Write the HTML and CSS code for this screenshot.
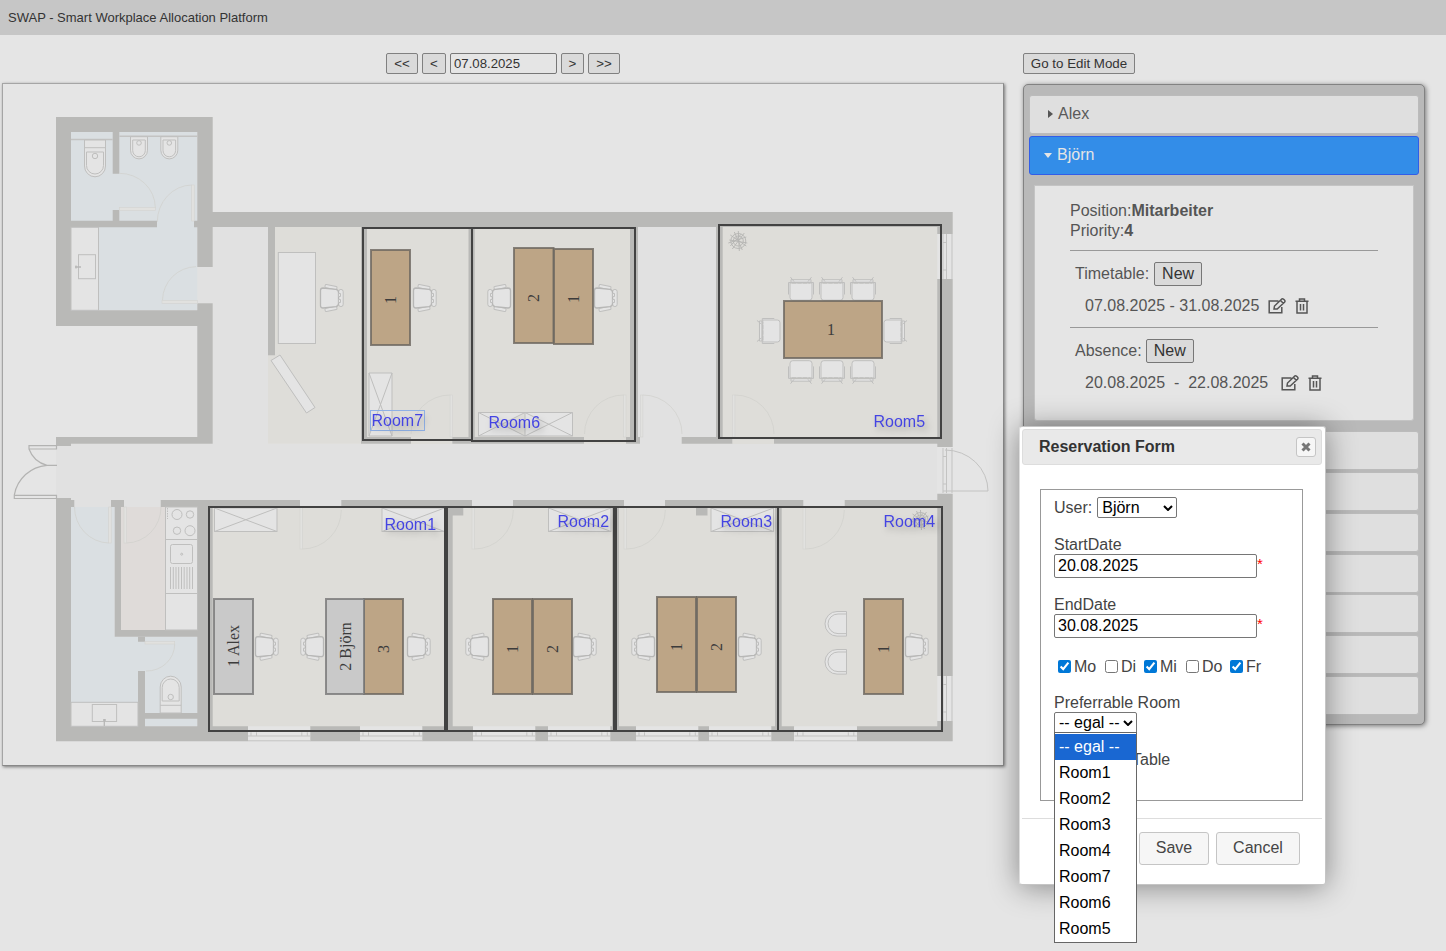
FILE: index.html
```html
<!DOCTYPE html>
<html lang="en">
<head>
<meta charset="utf-8">
<title>SWAP - Smart Workplace Allocation Platform</title>
<link rel="stylesheet" href="styles.css">
</head>
<body>
<header class="topbar">SWAP - Smart Workplace Allocation Platform</header>
<main class="layout">
  <section class="plan-column">
    <div class="date-nav">
      <button class="btn w32">&lt;&lt;</button><button class="btn w24">&lt;</button><input class="date" type="text" value="07.08.2025"><button class="btn w23">&gt;</button><button class="btn w32">&gt;&gt;</button>
    </div>
    <div class="plan">
      <svg class="floor" viewBox="3 84 1000 681" width="1000" height="681">
        <defs>
          <g id="office" class="furn">
            <rect x="-7" y="-12.5" width="12" height="3.2" rx="1" transform="rotate(12 -1 -11)"/>
            <rect x="-7" y="9.3" width="12" height="3.2" rx="1" transform="rotate(-12 -1 11)"/>
            <rect x="6.6" y="-8.6" width="4.6" height="17.2" rx="2.3"/>
            <path d="M-9-10 L4-8.6 Q6.5-8 6.5-5.500 L6.500 5.500 Q6.500 8 4 8.600 L-9 10 Q-11.500 10-11.500 7.500 L-11.500-7.500 Q-11.500-10-9-10Z" class="bold"/>
            <path d="M6.500-4.500h2v3h-2zM6.500 1.500h2v3h-2z"/>
          </g>
          <g id="meeting" class="furn">
            <path d="M-10.500-12.300L-7-8M10.500-12.300L7-8M-12.500 5v-12h25v12M-10-9.800h20v2.500h-20z"/>
            <path d="M-11-6.500h22v14.500q0 2.700-2.700 2.700h-16.600q-2.700 0-2.700-2.700z"/>
            <path d="M-9-6.500h18" stroke-dasharray="4 1.500"/>
          </g>
          <g id="plant" class="leafy">
            <circle r="7.500"/><circle r="5"/>
            <path d="M-10 2L8-4M-8-6L8 5M0-10L1 10M-6 8L6-8M-9-1L9 2M-4-9L4 9M-8 5L3-7"/>
          </g>
          <g id="bidet" class="furn"><path d="M-8.500 0h17v13.500a8.500 8.700 0 0 1-17 0z"/><path d="M-6.300 3.300h12.600v10.500a6.300 6.300 0 0 1-12.600 0z"/><circle cy="6.200" r="2.300"/></g>
          <g id="wc" class="furn"><path d="M-10.500 0h21v26a10.500 10.800 0 0 1-21 0zM-10.500 7.700h21"/><path d="M-8.500 12h17v13.500a8.500 8.500 0 0 1-17 0z"/><circle cy="16" r="2.700"/></g>
          <g id="shelf" class="furn"><rect width="62.500" height="23.500"/><path d="M0 0L62.500 23.500M62.500 0L0 23.500"/></g>
          <g id="win"><rect width="62.300" height="15" class="pale"/><path d="M0 9.700h62.300M0 14.500h62.300M3 6v3.500M8.500 6v3.500M53.800 6v3.500M59.300 6v3.500" class="line"/></g>
          <g id="sidewin"><rect width="15.400" height="45" class="pale"/><path d="M5.700 0v45M9.200 0v45M14.700 0v45M5.700 8.500h3.500M5.700 36h3.500" class="line"/></g>
          <g id="door" class="swing"><rect x="0" y="0" width="2.400" height="42"/><path d="M2.400 42A39 39 0 0 0 41.300 3"/></g>
          <g id="doorup" class="swing"><rect x="0" y="-42" width="2.400" height="42"/><path d="M2.400-42A39 39 0 0 1 41.500-3"/></g>
        </defs>

        <!-- floors -->
        <path class="hall" d="M212.700 227H268V443.700H937.300V500.500H56V443.700H212.700ZM197 267h16v36.300h-16zM638 227h78v217h-78zM74.300 500h36.700v7H74.300zM124 500h36.700v7H124zM300 500h41v7h-41zM472 500h41v7h-41zM624 500h41v7h-41zM803.300 500h41.400v7h-41.400z"/>
        <path class="wet" d="M71 132H197.300V310.300H71ZM71 507H114.700V636.700H197.300V726.300H71Z"/>
        <path class="kitchen" d="M121 507h44.500v123H121z"/>
        <path class="office-floor" d="M268 227H361V443.700H268ZM362 227H638V438H362ZM411 437h41v7h-41zM584 437h42v7h-42zM716 227H938V438H716ZM732 437h42v7h-42zM208 507H938V727H208Z"/>

        <!-- walls -->
        <path class="wall" d="M56 117H212.700V212H952.700V234H937.300V227H212.700V267H197.300V132H71V310.300H197.300V303.300H212.700V443.700H71V446H56V437H197.300V326H56Z"/>
        <path class="wall" d="M112.700 132h6.600v41.700h-6.600zM112.700 210h6.600v11h-6.600zM71 220.700h86v6.600H71zM194 220.700h4v6.600h-4zM268 227h7v128.300h-7zM361 227h6v216.700h-6zM361 437h50v6.700h-50zM468.500 227h6.200v216.700h-6.200zM452.300 437H584v6.700H452.300zM630 227h8v210h2v6.700h-14V437h4zM716 227h6.700v210H716zM681.700 437h50.600v6.700h-50.600zM774 437h163.300V279h15.400v168h-15.400v-3.300H774z"/>
        <path class="wall" d="M56 498H71V500H74.300V507H71V726.300H197.300V636.700H114.700V507H111V500H124V507H121V630H197.300V507H160.700V500H300V507H212.700V726.300H248V741.300H56Z"/>
        <path class="wall" d="M341.300 500H472v7H341.300zM513 500h111v7H513zM665 500h138.300v7H665zM844.700 500h92.600v-6.300h15.400V676h-15.400V507h-92.600zM937.300 720.700h15.400v20.600H857V726.300h80.300zM310 726.300h50v15h-50zM422 726.300h51v15h-51zM535 726.300h13v15h-13zM610 726.300h26v15h-26zM698 726.300h11v15h-11zM771 726.300h23v15h-23z"/>
        <path class="wall" d="M444 507h8.700v220H444zM450 507h13.300v8.500H450zM612 507h7v220h-7zM696 507h11.500v8.500H696zM775 507h6.700v220H775zM138 636.700h7v5h-7zM138 671h7v56h-7zM145 713h53v5.700h-53z"/>

        <!-- windows -->
        <use href="#win" x="248" y="726.300"/><use href="#win" x="360" y="726.300"/><use href="#win" x="473" y="726.300"/><use href="#win" x="548" y="726.300"/><use href="#win" x="636" y="726.300"/><use href="#win" x="709" y="726.300"/><use href="#win" x="794.500" y="726.300"/>
        <use href="#sidewin" x="937.300" y="234"/><use href="#sidewin" x="937.300" y="448"/><use href="#sidewin" x="937.300" y="676"/>

        <!-- doors -->
        <g class="swing">
          <rect x="119.300" y="207.500" width="36" height="3"/><path d="M119.300 173.300A36 34.500 0 0 1 155.300 207.500"/>
          <rect x="191.700" y="185" width="2.500" height="36"/><path d="M157.300 222A35 37 0 0 1 191.700 185"/>
          <rect x="162" y="300.300" width="35.500" height="3"/><path d="M162.500 300A34 34 0 0 1 196 266.700"/>
          <rect x="108.700" y="507" width="2.500" height="36"/><path d="M74.500 507A35 36 0 0 0 108.700 543"/>
          <rect x="124" y="507" width="2.500" height="36"/><path d="M161 507A35 36 0 0 1 126.500 543"/>
          <rect x="145" y="641.500" width="29.700" height="2.500"/><path d="M174.700 644A28 27 0 0 1 146 671"/>
        </g>
        <use href="#door" x="300" y="507"/><use href="#door" x="472" y="507"/><use href="#door" x="624" y="507"/><use href="#door" x="803" y="507"/>
        <use href="#doorup" x="640.500" y="437"/><use href="#doorup" x="732.500" y="437"/>
        <use href="#doorup" transform="translate(452.500 437) scale(-1 1)"/><use href="#doorup" transform="translate(626 437) scale(-1 1)"/>
        <path class="entry" d="M56.500 445.700H29V449H56.500ZM29 449A26 26 0 0 0 47 465.300H57M56.500 495.300H14.300V498.500H56.500ZM14.300 495A36 36 0 0 1 47 465.300"/>
        <path class="line" d="M945 450A43 41 0 0 1 988 491H943"/>

        <!-- sanitary and kitchen -->
        <path class="line" d="M71 139.500h41.700M119.300 136.300h78" stroke-width="1.400"/>
        <use href="#wc" x="95" y="140"/><use href="#bidet" x="139" y="136.700"/><use href="#bidet" x="169.300" y="136.700"/>
        <use href="#wc" transform="translate(170.700 713) scale(1 -1)"/>
        <g class="furn">
          <rect x="71" y="227.300" width="27.500" height="83"/><rect x="78.500" y="254.700" width="17" height="24"/><path d="M75 267h6M76 265.500v3" class="bold"/>
          <rect x="71" y="702.300" width="67" height="24"/><rect x="92.300" y="704.500" width="24.300" height="17"/><path d="M104.300 719v7M103 720h3" class="bold"/>
          <rect x="165.500" y="507" width="32" height="123"/><path d="M165.500 539.500h32M165.500 593.500h32"/>
          <circle cx="177" cy="514.500" r="5"/><circle cx="190" cy="514.500" r="3.700"/><circle cx="177" cy="530.700" r="3.700"/><circle cx="190" cy="530.700" r="5"/><path d="M167.500 508v11" stroke-dasharray="1.500 1"/>
          <rect x="170.500" y="544.500" width="22" height="19" rx="2"/><circle cx="181.700" cy="554.200" r="1"/>
          <path d="M170.500 567v22M173.300 567v22M176 567v22M178.700 567v22M181.500 567v22M184.200 567v22M187 567v22M189.700 567v22M192.500 567v22"/>
          <rect x="278.300" y="252.500" width="37.200" height="91"/><path d="M271 360.500L280 355L315 407.500L306.500 413Z"/>
          <path d="M846.500 611.500H837a12 12.300 0 0 0 0 24.600h9.500zM846.500 614H838a10 9.800 0 0 0 0 19.600h8.500M846.500 649.500H837a12 12.300 0 0 0 0 24.600h9.500zM846.500 652H838a10 9.800 0 0 0 0 19.600h8.500"/>
        </g>

        <!-- shelves and plants -->
        <use href="#shelf" x="214.500" y="508"/><use href="#shelf" x="382" y="508"/><use href="#shelf" x="548.500" y="508"/><use href="#shelf" x="711" y="508"/>
        <g class="furn"><path d="M369 373h23v63h-23zL392 436M392 373L369 436M478.500 412.500h94v23.500h-94zL525 436V412.500L478.500 436M525 412.500L572.500 436M572.500 412.500L525 436"/></g>
        <use href="#plant" x="738.300" y="241"/><use href="#plant" x="920.500" y="520"/>

        <!-- chairs -->
        <use href="#office" x="332" y="298"/><use href="#office" x="425" y="298"/><use href="#office" x="606" y="298"/><use href="#office" transform="translate(499 298) scale(-1 1)"/>
        <use href="#office" x="267" y="646.700"/><use href="#office" transform="translate(312 646.700) scale(-1 1)"/><use href="#office" x="419" y="646.700"/>
        <use href="#office" transform="translate(477 646.700) scale(-1 1)"/><use href="#office" x="585" y="646.700"/>
        <use href="#office" transform="translate(643 646.700) scale(-1 1)"/><use href="#office" x="750" y="646.700"/><use href="#office" x="917" y="646.700"/>
        <use href="#meeting" x="801" y="289.500"/><use href="#meeting" x="832" y="289.500"/><use href="#meeting" x="863" y="289.500"/>
        <use href="#meeting" transform="translate(801 371.400) scale(1 -1)"/><use href="#meeting" transform="translate(832 371.400) scale(1 -1)"/><use href="#meeting" transform="translate(863 371.400) scale(1 -1)"/>
        <use href="#meeting" transform="translate(769.300 331) rotate(-90)"/><use href="#meeting" transform="translate(894.700 331) rotate(90)"/>

        <!-- bookable rooms -->
        <g class="room">
          <rect x="363" y="228" width="109" height="212"/><rect x="472" y="228" width="163" height="213"/><rect x="719" y="225" width="222" height="213"/>
          <rect x="209" y="507" width="236" height="224"/><rect x="447" y="507" width="167" height="224"/><rect x="616" y="507" width="162" height="224"/><rect x="778" y="507" width="164" height="224"/>
        </g>

        <!-- desks -->
        <g class="desk">
          <rect x="371" y="250" width="39" height="95"/><rect x="514" y="248" width="39.500" height="95"/><rect x="554" y="249" width="39" height="95"/><rect x="784" y="301" width="98" height="57"/>
          <rect x="364" y="599" width="39" height="95"/><rect x="493" y="599" width="39" height="95"/><rect x="533" y="599" width="39" height="95"/>
          <rect x="657" y="597" width="39" height="95"/><rect x="697" y="597" width="39" height="95"/><rect x="864" y="599" width="39" height="95"/>
          <rect class="taken" x="214" y="599" width="39" height="95"/><rect class="taken" x="326" y="599" width="38" height="95"/>
        </g>
        <g class="num">
          <text transform="translate(396 300) rotate(-90)">1</text><text transform="translate(539 298) rotate(-90)">2</text><text transform="translate(579 299) rotate(-90)">1</text><text x="831" y="335">1</text>
          <text transform="translate(239 646) rotate(-90)">1 Alex</text><text transform="translate(351 646.500) rotate(-90)">2 Björn</text><text transform="translate(389 649) rotate(-90)">3</text>
          <text transform="translate(518 649) rotate(-90)">1</text><text transform="translate(558 649) rotate(-90)">2</text><text transform="translate(682 647) rotate(-90)">1</text><text transform="translate(722 647) rotate(-90)">2</text><text transform="translate(889 649) rotate(-90)">1</text>
        </g>
        <rect class="selected" x="370.500" y="410.500" width="54" height="20"/>
        <g class="label">
          <text x="371.500" y="426">Room7</text><text x="488.500" y="428">Room6</text><text x="873.500" y="427">Room5</text>
          <text x="384.500" y="530">Room1</text><text x="557.500" y="527">Room2</text><text x="720.500" y="527">Room3</text><text x="883.500" y="527">Room4</text>
        </g>
      </svg>
    </div>
  </section>

  <aside class="side">
    <button class="btn edit-mode">Go to Edit Mode</button>
    <div class="accordion">
      <div class="item"><i class="tri"></i>Alex</div>
      <div class="item active"><i class="tri down"></i>Björn</div>
      <div class="details">
        <div>Position:<b>Mitarbeiter</b></div>
        <div>Priority:<b>4</b></div>
        <div class="block">
          <div class="block-head">Timetable: <button class="new">New</button></div>
          <div class="period"><span>07.08.2025 - 31.08.2025</span>
            <svg class="ico" viewBox="0 0 18 16"><path d="M10.500 3H1.200V14.800H13.800V9M6 11L6.500 8L13.500 1.200Q14.500.4 15.700 1.300L16.400 2Q17.500 3.200 16.500 4.200L9.200 11Z M12.500 2.500L15.300 5.300"/></svg>
            <svg class="ico bin" viewBox="0 0 14 16"><path d="M.5 3.200H13.500M2 3.500V15H12V3.500M4.500 3V1H9.500V3M5.500 6V12.500M8.500 6V12.500"/></svg>
          </div>
        </div>
        <div class="block">
          <div class="block-head absence">Absence: <button class="new">New</button></div>
          <div class="period wide"><span>20.08.2025 &nbsp;-&nbsp; 22.08.2025</span>
            <svg class="ico" viewBox="0 0 18 16"><path d="M10.500 3H1.200V14.800H13.800V9M6 11L6.500 8L13.500 1.200Q14.500.4 15.700 1.300L16.400 2Q17.500 3.200 16.500 4.200L9.200 11Z M12.500 2.500L15.300 5.300"/></svg>
            <svg class="ico bin" viewBox="0 0 14 16"><path d="M.5 3.200H13.500M2 3.500V15H12V3.500M4.500 3V1H9.500V3M5.500 6V12.500M8.500 6V12.500"/></svg>
          </div>
        </div>
      </div>
      <div class="item"></div><div class="item"></div><div class="item"></div><div class="item"></div><div class="item"></div><div class="item"></div><div class="item"></div>
    </div>
  </aside>
</main>

<div class="dialog">
  <div class="titlebar"><b>Reservation Form</b><button class="close"><svg viewBox="0 0 10 10"><path d="M1.500 1.500L8.500 8.500M8.500 1.500L1.500 8.500"/></svg></button></div>
  <div class="form">
    <div class="user-row">User:<span class="select user">Björn<svg viewBox="0 0 10 6"><path d="M1 1L5 5L9 1"/></svg></span></div>
    <div class="field">StartDate<div class="entry-row"><input type="text" value="20.08.2025"><em>*</em></div></div>
    <div class="field">EndDate<div class="entry-row"><input type="text" value="30.08.2025"><em>*</em></div></div>
    <div class="days">
      <label class="mo"><input type="checkbox" checked>Mo</label><label class="di"><input type="checkbox">Di</label><label class="mi"><input type="checkbox" checked>Mi</label><label class="do"><input type="checkbox">Do</label><label><input type="checkbox" checked>Fr</label>
    </div>
    <div class="field pref">Preferrable Room
      <div class="room-select"><span class="select room-box">-- egal --<svg viewBox="0 0 10 6"><path d="M1 1L5 5L9 1"/></svg></span>
        <ul class="options"><li class="on">-- egal --</li><li>Room1</li><li>Room2</li><li>Room3</li><li>Room4</li><li>Room7</li><li>Room6</li><li>Room5</li></ul>
      </div>
    </div>
    <div class="table-label">Table</div>
  </div>
  <div class="actions"><button>Save</button><button class="cancel">Cancel</button></div>
</div>
</body>
</html>
```
FILE: styles.css
```css
* { box-sizing: border-box; }
body { margin: 0; height: 951px; overflow: hidden; background: #e5e5e5; font-family: "Liberation Sans", Arial, sans-serif; font-size: 16px; color: #555; }
button, input { font-family: inherit; }
.topbar { height: 35px; padding-left: 8px; background: #c6c6c6; color: #333; font-size: 13px; line-height: 35px; }
.layout { display: flex; padding-top: 18px; padding-left: 2px; }
.plan-column { width: 1002px; }
.date-nav { display: flex; gap: 4px; height: 21px; margin-left: 384px; }
.btn { height: 21px; padding: 0; border: 1px solid #808080; border-radius: 2px; background: #dadada; color: #333; font-size: 13.33px; line-height: 18px; }
.w32 { width: 32px; } .w24 { width: 24px; } .w23 { width: 23px; }
.date { width: 107px; height: 21px; padding: 0 3px; border: 1px solid #777; border-radius: 2px; background: #e5e5e5; color: #333; font-size: 13.2px; }
.plan { margin-top: 9px; border: 1px solid #a0a0a0; border-color: #a5a5a5 #888 #888 #a5a5a5; box-shadow: 1px 1px 3px #777; }
.floor { display: block; }

.hall { fill: #e1e1e1; } .wet { fill: #dadfe2; } .kitchen { fill: #dfdbd9; } .office-floor { fill: #deddd9; }
.wall { fill: #b9b9b7; }
.pale { fill: #e4e4e4; }
.line { fill: none; stroke: #c3c3c2; }
.entry { fill: none; stroke: #b3b3b2; stroke-width: 1.2; }
.swing rect { fill: #e1e1df; stroke: #d3d3d0; stroke-width: .6; }
.swing path { fill: none; stroke: #d0d0cc; stroke-width: .7; }
.furn { fill: #e4e4e4; stroke: #bfbfbe; stroke-width: 1; }
.furn .bold { stroke-width: 1.3; stroke: #b7b7b6; }
.leafy { fill: none; stroke: #b4b4b2; stroke-width: .9; }
.room rect { fill: none; stroke: #424242; stroke-width: 2; }
.desk rect { fill: #bda586; stroke: #6b675f; stroke-opacity: .8; stroke-width: 2; }
.desk .taken { fill: #c9c9c9; stroke: #777; }
.num { font: 16px "Liberation Serif", serif; fill: #3c3c3c; text-anchor: middle; }
.label { fill: #4444e2; font-size: 16px; filter: drop-shadow(3px 4px 3px rgba(0,0,0,.25)); }
.selected { fill: none; stroke: #8fb0e5; }

.side { width: 402px; margin-left: 19px; }
.edit-mode { display: block; width: 112px; }
.accordion { height: 641px; margin-top: 10px; padding: 9px 5px; background: #b9b9b9; border: 1px solid #828282; border-radius: 5px; box-shadow: 1px 1px 5px #777; }
.item { display: flex; align-items: center; height: 39px; margin: 1.85px 0 0; padding: 0 0 1px 17px; border: 1px solid #bbb; border-radius: 3px; background: #dfdfdf; }
.accordion .item:first-child { margin-top: 1px; color: #5a5a5a; }
.accordion .item.active { margin-top: 2px; background: #338de8; border-color: #315de8; color: #e5e5e5; }
.tri { width: 0; height: 0; margin: 0 5px 0 1px; border: 4px solid transparent; border-left: 5px solid #555; border-right: 0; }
.tri.down { margin: 0 5px 0 -3px; border: 4px solid transparent; border-top: 5px solid #e5e5e5; border-bottom: 0; }
.details { height: 236px; margin: 10px 5px; padding: 15px 35px; border: 1px solid #c4c4c4; border-radius: 0 0 3px 3px; background: #e5e5e5; line-height: 20px; }
.block { width: 308px; height: 77px; border-top: 1px solid #999; }
.details > div:nth-child(2) { margin-bottom: 9px; }
.block-head { display: flex; gap: 5px; align-items: center; padding: 11px 0 0 5px; }
.block-head.absence { gap: 4px; }
.new { width: 48px; height: 24px; padding: 0; border: 1px solid #777; border-radius: 2px; background: #dadada; color: #333; font-size: 16px; line-height: 20px; }
.period { display: flex; align-items: center; padding: 10px 0 0 15px; }
.ico { width: 18px; height: 16px; margin-left: 9px; fill: none; stroke: #555; stroke-width: 1.5; }
.wide .ico { margin-left: 13px; }
.ico.bin, .wide .ico.bin { width: 14px; margin-left: 9px; stroke-width: 1.5; }

.dialog { position: absolute; left: 1019px; top: 426px; width: 307px; height: 459px; padding: 3px; border: 1px solid #c5c5c5; border-radius: 3px; background: #fff; color: #444; box-shadow: 0 2px 30px rgba(0,0,0,.42); border-left-color: #ddd; }
.titlebar { display: flex; align-items: center; justify-content: space-between; width: 300px; height: 36px; margin: -1px 0 0 -1px; padding: 0 5px 1px 16px; border: 1px solid #ddd; border-radius: 3px; background: #e9e9e9; color: #333; }
.close { display: flex; align-items: center; justify-content: center; width: 20px; height: 20px; margin-top: 1px; padding: 0; border: 1px solid #c5c5c5; border-radius: 3px; background: #f6f6f6; }
.close svg { width: 10px; height: 10px; stroke: #777; stroke-width: 3; }
.form { width: 263px; height: 312px; margin: 24px 0 0 17px; padding: 7px 13px; border: 1px solid #999; line-height: 20px; }
.user-row { display: flex; gap: 5px; align-items: center; height: 21px; }
.select { display: flex; align-items: center; justify-content: space-between; height: 21px; padding: 0 3px 0 4px; border: 1px solid #767676; border-radius: 2px; background: #fff; color: #000; }
.select svg { width: 10px; height: 6px; fill: none; stroke: #000; stroke-width: 2; }
.user { width: 80px; }
.field { height: 60px; margin-top: 17px; }
.field + .field { margin-top: 0; }
.entry-row { display: flex; margin-top: -1px; }
.entry-row input { width: 203px; height: 24px; padding: 0 3px 1px; border: 1px solid #767676; border-radius: 2px; color: #000; font-size: 16px; }
.entry-row em { color: red; font-style: normal; font-size: 15px; }
.days { display: flex; padding: 2px 0 0 4px; }
.days label { display: flex; align-items: center; }
.days input { width: 13px; height: 13px; margin: 0 3px 2px 0; accent-color: #0078d7; }
.mo { width: 47px; } .mi { width: 42px; } .di { width: 39px; } .do { width: 44px; }
.pref { height: 41px; margin-top: 16px; }
.room-select { position: relative; width: 83px; margin-top: -1px; }
.room-box { border-radius: 2px 2px 0 0; }
.options { position: absolute; z-index: 2; top: 20px; left: 0; width: 83px; height: 211px; margin: 0; padding: 1px 0 0; border: 1px solid #666; background: #fff; color: #000; list-style: none; line-height: 26px; }
.options li { padding-left: 4px; height: 26px; }
.options .on { background: #1967d2; color: #fff; }
.table-label { margin: 16px 0 0 78px; }
.actions { display: flex; gap: 7px; width: 300px; height: 62px; margin: 17px 0 0 -1px; padding: 13px 0 0 117px; border-top: 1px solid #ddd; }
.actions button { width: 70px; height: 33px; padding: 0 0 2px; border: 1px solid #c5c5c5; border-radius: 3px; background: #f6f6f6; color: #454545; font-size: 16px; }
.actions .cancel { width: 84px; }
```
